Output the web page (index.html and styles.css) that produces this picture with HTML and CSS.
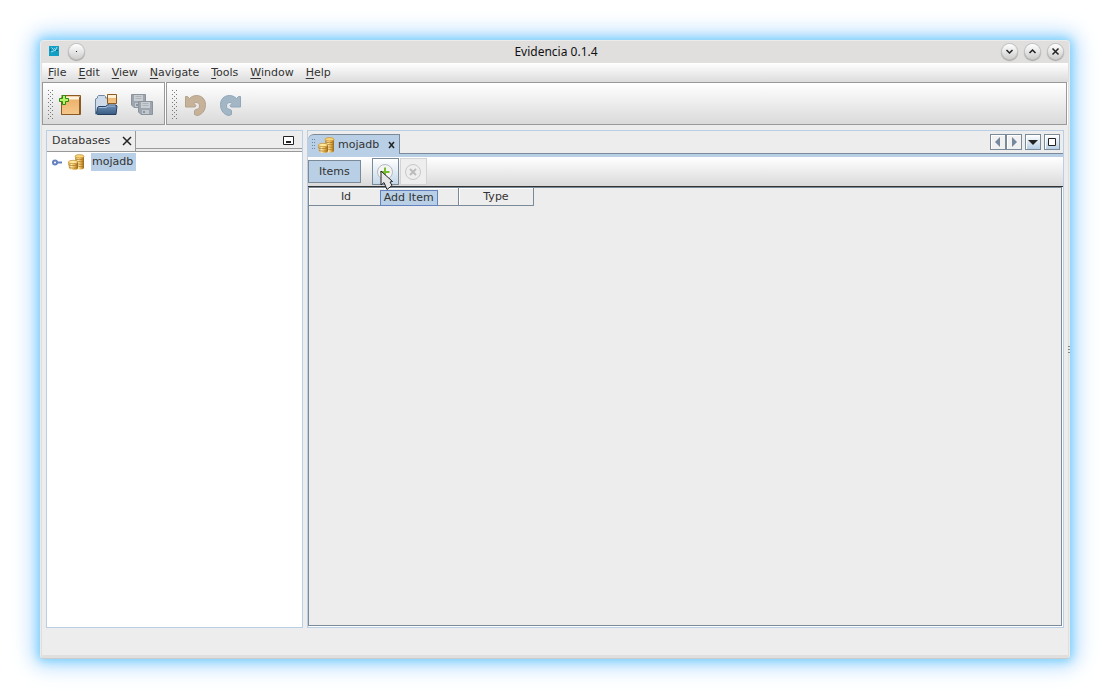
FILE: index.html
```html
<!DOCTYPE html>
<html lang="en">
<head>
<meta charset="utf-8">
<title>Evidencia 0.1.4</title>
<link rel="stylesheet" href="styles.css">
</head>
<body>
<svg class="defs" width="0" height="0" aria-hidden="true">
  <defs>
    <linearGradient id="gold" x1="0" x2="1" y1="0" y2="0">
      <stop offset="0" stop-color="#c98f2e"/><stop offset=".35" stop-color="#ffeeb0"/><stop offset=".7" stop-color="#e6ac45"/><stop offset="1" stop-color="#94651c"/>
    </linearGradient>
    <linearGradient id="box" x1="0" x2="0" y1="0" y2="1">
      <stop offset="0" stop-color="#e8ac62"/><stop offset="1" stop-color="#f6c88c"/>
    </linearGradient>
    <linearGradient id="navy" x1="0" x2="0" y1="0" y2="1">
      <stop offset="0" stop-color="#6d8fb5"/><stop offset="1" stop-color="#3b5c82"/>
    </linearGradient>
    <symbol id="coins" viewBox="0 0 18 16">
      <path d="M7 2l1 12c0 2 7 2 8 0V2z" fill="url(#gold)"/>
      <path d="M0 8l1 6c0 2.500 9 2.500 9 0V8z" fill="url(#gold)"/>
      <path d="M7 4.500c1 1.500 8 1.500 9 0M8 7c2 1 7 1 8 0M9 9.500c2 1 6 1 7 0M10 12c2 1 5 1 6 0M.5 10.500c1 1.500 8 1.500 9 0M1 13c1 1.500 8 1.500 9 0" fill="none" stroke="#a06f20" stroke-width=".7"/>
      <ellipse cx="11.500" cy="2.300" rx="4.500" ry="1.700" fill="#f8d67c" stroke="#c58a2c" stroke-width=".7"/>
      <ellipse cx="5" cy="8" rx="4.500" ry="1.700" fill="#ffe79c" stroke="#c58a2c" stroke-width=".7"/>
    </symbol>
  </defs>
</svg>
<div class="window">
  <header class="titlebar">
    <div class="title-side">
      <svg class="app-icon" width="10" height="10" viewBox="0 0 10 10" aria-hidden="true"><path fill="#129fc4" d="M0 0h10v10H0z"/><path d="M2.500 1.500l2 2 1-1 1 1M8 1L6.500 4M2 6c2-1 3-1 5-2" fill="none" stroke="#c4edf8" stroke-width=".8"/><path fill="#0b6f99" d="M1 3h1v2H1zM7 4h2v1H7z"/></svg>
      <button class="round" aria-label="Window menu"><svg width="15" height="15" viewBox="0 0 15 15"><path fill="#222" d="M7 7h1v1H7z"/></svg></button>
    </div>
    <h1 class="title">Evidencia 0.1.4</h1>
    <div class="title-side title-end">
      <button class="round" aria-label="Minimize"><svg width="15" height="15" viewBox="0 0 15 15"><path d="M4.500 6l3 3 3-3" class="mark"/></svg></button>
      <button class="round" aria-label="Maximize"><svg width="15" height="15" viewBox="0 0 15 15"><path d="M4.500 9l3-3 3 3" class="mark"/></svg></button>
      <button class="round" aria-label="Close"><svg width="15" height="15" viewBox="0 0 15 15"><path d="M4.500 4.500l6 6M10.500 4.500l-6 6" class="mark"/></svg></button>
    </div>
  </header>
  <nav class="menubar">
    <button><u>F</u>ile</button><button><u>E</u>dit</button><button><u>V</u>iew</button><button><u>N</u>avigate</button><button><u>T</u>ools</button><button><u>W</u>indow</button><button><u>H</u>elp</button>
  </nav>
  <div class="toolbars">
    <div class="toolbar">
      <span class="grip"></span>
      <button aria-label="New"><svg width="24" height="24" viewBox="0 0 24 24"><path d="M3.500 5l1-2.500h16l1 2.500v16.500h-18V5z" fill="url(#box)" stroke="#8a5b23"/><path d="M4 3.500h17v3H4z" fill="#fff3df"/><path d="M3.500 2.500h19v19h-19" fill="none" stroke="#8a5b23"/><path d="M4.500 2.500h3v3h3v3h-3v3h-3v-3h-3v-3h3z" fill="#b6f36c" stroke="#2d8a0d" stroke-linejoin="round"/></svg></button>
      <button aria-label="Open"><svg width="24" height="24" viewBox="0 0 24 24"><path d="M1.500 21V6l2-1V3.500l1-1h6l1 1V5h3v16z" fill="#cddaea" stroke="#6f87a3"/><path d="M13.500 1.500h9v9h-9z" fill="url(#box)" stroke="#8a5b23"/><path d="M14 2h8v3h-8z" fill="#fff0d6"/><path d="M3.500 14.500l1-1h7l2-1.500h8.500l1 1-1 8.500H3.500l-1-1z" fill="url(#navy)" stroke="#243f60"/><path d="M5 14.500h7l2-1.500h7" fill="none" stroke="#a5bfdb"/></svg></button>
      <button aria-label="Save all"><svg width="24" height="24" viewBox="0 0 24 24"><g id="disk"><path d="M1.500 1.500h14v13H4L1.500 12z" fill="#9da6af" stroke="#8b949d"/><path d="M4 2h9v6H4z" fill="#c9ced2"/><path d="M5.500 3.500h6M5.500 5.500h6" stroke="#adb3b9"/><path d="M5 10h7v4H5z" fill="#c3c8cc"/><path d="M6 11h2v2H6z" fill="#8b949d"/></g><use href="#disk" x="7" y="7"/></svg></button>
    </div>
    <div class="toolbar toolbar-wide">
      <span class="grip"></span>
      <button aria-label="Undo"><svg width="24" height="24" viewBox="0 0 24 24"><path id="turn" d="M3.500 3.500h2l2 2C9.500 3.500 12 2.500 14.500 2.500c5.500 0 9 4 9 9 0 6-3.500 10.500-8.500 11l-2.500-1v-4l1-1c2.500 0 4-1.500 4-3.500s-1.500-3.500-3.500-3.500c-1 0-1.500.5-2 1l2 2-1 1.500h-9.500z" fill="#c6b199" stroke="#b5a28c"/></svg></button>
      <button aria-label="Redo"><svg width="24" height="24" viewBox="0 0 24 24"><path transform="matrix(-1 0 0 1 26 0)" d="M3.500 3.500h2l2 2C9.500 3.500 12 2.500 14.500 2.500c5.500 0 9 4 9 9 0 6-3.500 10.500-8.500 11l-2.500-1v-4l1-1c2.500 0 4-1.500 4-3.500s-1.500-3.500-3.500-3.500c-1 0-1.500.5-2 1l2 2-1 1.500h-9.500z" fill="#a3b6c6" stroke="#90a7ba"/></svg></button>
    </div>
  </div>
  <main class="workspace">
    <section class="panel explorer">
      <div class="side-tabs">
        <div class="side-tab">Databases<button class="plain" aria-label="Close Databases"><svg width="10" height="10" viewBox="0 0 10 10"><path d="M1 1l8 8M9 1L1 9" stroke="#222" stroke-width="1.500"/></svg></button></div>
        <div class="side-rest"><button class="plain" aria-label="Minimize panel"><svg width="11" height="9" viewBox="0 0 11 9"><path d="M.5.5h10v8H.5z" fill="#fff" stroke="#222"/><path fill="#222" d="M3 5h5v2H3z"/></svg></button></div>
      </div>
      <ul class="tree">
        <li><svg width="11" height="7" viewBox="0 0 11 7" aria-hidden="true"><circle cx="3" cy="3.500" r="2" fill="#fff" stroke="#6680c0" stroke-width="2"/><path d="M5 3.500h5" stroke="#6680c0" stroke-width="2"/></svg><svg width="18" height="16" aria-hidden="true"><use href="#coins"/></svg><span class="node">mojadb</span></li>
      </ul>
    </section>
    <section class="panel editor">
      <div class="doc-tabs">
        <div class="doc-tab"><span class="tab-grip"></span><svg width="18" height="16" aria-hidden="true"><use href="#coins"/></svg><span>mojadb</span><button class="plain" aria-label="Close mojadb"><svg width="8" height="8" viewBox="0 0 8 8"><path d="M1 1l5 6M6 1L1 7" stroke="#222" stroke-width="1.500"/></svg></button></div>
        <div class="doc-controls">
          <div class="pair"><button class="nav" aria-label="Previous tab"><svg width="14" height="14" viewBox="0 0 14 14"><path d="M9 2v10L4 7z" fill="#76889d"/></svg></button><button class="nav" aria-label="Next tab"><svg width="14" height="14" viewBox="0 0 14 14"><path d="M5 2v10l5-5z" fill="#76889d"/></svg></button></div>
          <button class="nav lit" aria-label="Tab list"><svg width="14" height="14" viewBox="0 0 14 14"><path d="M2 5h10L7 10z" fill="#222"/></svg></button>
          <button class="nav lit" aria-label="Maximize editor"><svg width="14" height="14" viewBox="0 0 14 14"><path d="M3.500 3.500h7v7h-7z" fill="#fff" stroke="#222"/></svg></button>
        </div>
      </div>
      <div class="view-bar">
        <button class="items">Items</button>
        <div class="actions">
          <button class="action add" aria-label="Add Item"><svg width="18" height="18" viewBox="0 0 18 18"><circle cx="9" cy="9" r="7.500" fill="#f4f4f4" stroke="#b4babf"/><path d="M9 4.500v9M4.500 9h9" stroke="#76bd2c" stroke-width="2"/></svg><svg class="pointer" width="14" height="21" viewBox="0 0 14 21" aria-hidden="true"><path d="M1 1v14l3-2.500L7 19.500l5-4-2-3.500 2.500-.5z" fill="#e6e6e6" stroke="#222" stroke-linejoin="round"/></svg></button>
          <button class="action off" aria-label="Remove" disabled><svg width="18" height="18" viewBox="0 0 18 18"><circle cx="9" cy="9" r="7.500" fill="#eee" stroke="#c8c8c8"/><path d="M6 6l6 6M12 6l-6 6" stroke="#bcbcbc" stroke-width="2"/></svg></button>
          <span class="tooltip" role="tooltip">Add Item</span>
        </div>
      </div>
      <div class="table-area">
        <table class="grid"><thead><tr><th>Id</th><th></th><th>Type</th></tr></thead></table>
      </div>
    </section>
  </main>
  <footer class="status"></footer>
  <span class="edge-grip"></span>
</div>
</body>
</html>
```
FILE: styles.css
```css
* { box-sizing: border-box; }
body {
  margin: 0;
  min-height: 100vh;
  padding: 40px;
  display: flex;
  background: #fff;
  color: #333;
  font: 11px/14px "DejaVu Sans", sans-serif;
}
button {
  margin: 0;
  padding: 0;
  border: 0;
  background: none;
  color: inherit;
  font: inherit;
}
svg { display: block; }
.defs { position: absolute; }
.window {
  position: relative;
  flex: 1;
  min-width: 0;
  display: flex;
  flex-direction: column;
  padding: 0 1px;
  border: 1px solid #ebebeb;
  border-bottom-color: #c9cccf;
  border-radius: 4px;
  background: #e0dfde;
  box-shadow: 0 0 10px 1px #74cefa, 0 0 18px 4px #b0dfff, 0 0 26px 8px #dcebff;
}
.titlebar {
  height: 22px;
  display: flex;
  align-items: center;
  padding: 0 5px 0 7px;
}
.title-side { flex: 1; display: flex; align-items: center; gap: 10px; padding-bottom: 2px; }
.title-end { justify-content: flex-end; gap: 8px; }
.title {
  margin: 0;
  font: 12px/16px "Noto Sans", sans-serif;
  color: #111;
}
.round {
  border-radius: 50%;
  background: linear-gradient(#fff, #cfcecd);
  box-shadow: 0 0 0 1px #c4c4c4, 0 1px 1px 1px #a4a4a4;
}
.mark { fill: none; stroke: #222; stroke-width: 1.5; }
.menubar {
  height: 19px;
  display: flex;
  align-items: center;
  background: linear-gradient(#fff, #dcdcdc);
}
.menubar button { padding: 0 6px; }
u { text-underline-offset: 2px; }
.toolbars {
  display: flex;
  gap: 1px;
  padding-right: 1px;
  background: #fff;
}
.toolbar {
  height: 43px;
  display: flex;
  align-items: center;
  gap: 12px;
  padding: 2px 10px 0 5px;
  border: 1px solid #999;
  background: linear-gradient(#fff, #dadada);
}
.toolbar-wide { flex: 1; }
.grip {
  width: 6px;
  height: 30px;
  margin-right: -8px;
  background:
    linear-gradient(#777, #777) 0 0 / 0 0,
    conic-gradient(#777 25%, transparent 0) -1px 1px / 2px 2px;
  background:
    conic-gradient(from 270deg at 1px 1px, #777 90deg, transparent 0) 0 0 / 4px 4px,
    conic-gradient(from 270deg at 1px 1px, #777 90deg, transparent 0) 2px 2px / 4px 4px;
}
.workspace {
  flex: 1;
  display: flex;
  gap: 4px;
  padding: 5px 4px 0;
  background: #ededed;
}
.panel {
  display: flex;
  flex-direction: column;
  border: 1px solid #b8cfe5;
}
.explorer { flex: 0 0 257px; background: #fff; }
.side-tabs { height: 21px; display: flex; background: #ededed; border-bottom: 1px solid #999; }
.side-tab { width: 89px; display: flex; align-items: center; padding-left: 5px; border-right: 1px solid #999; white-space: nowrap; }
.side-rest { flex: 1; height: 18px; display: flex; align-items: center; justify-content: flex-end; padding: 2px 8px 0 0; border-bottom: 1px solid #999; }
.side-tab .plain { margin-left: auto; margin-right: 3px; }
.tree { margin: 0; padding: 1px 0 0 5px; list-style: none; }
.tree li { display: flex; align-items: center; gap: 5px; height: 18px; }
.node { padding: 2px 3px 2px 1px; background: #b8cfe5; }
.editor { flex: 1; min-width: 0; background: #ededed; }
.doc-tabs {
  height: 26px;
  display: flex;
  align-items: flex-end;
  justify-content: space-between;
  border-bottom: 3px solid #b8cfe5;
  box-shadow: inset 0 -1px #7a8a99;
}
.doc-tab {
  height: 20px;
  display: flex;
  align-items: center;
  padding: 0 3px 0 4px;
  border: 1px solid #7a8a99;
  border-width: 1px 1px 0 0;
  border-top-left-radius: 6px;
  background: #b8cfe5;
}
.doc-tab > span + svg { margin-left: 3px; }
.doc-tab > svg + span { margin: 0 9px 0 2px; }
.tab-grip {
  width: 3px;
  height: 12px;
  background: conic-gradient(from 270deg at 1px 1px, #6e87a5 90deg, transparent 0) 0 0 / 2px 3px;
}
.doc-controls { display: flex; gap: 3px; padding: 0 3px 4px 0; }
.pair { display: flex; }
.nav { border: 1px solid #7a8a99; background: #f1f1f1; box-shadow: inset 1px 1px #fff; }
.lit { background: linear-gradient(#fff, #b8cfe5); }
.view-bar {
  height: 30px;
  display: flex;
  gap: 11px;
  border-bottom: 1px solid #333;
  background: linear-gradient(#fff, #dadada);
}
.items { height: 23px; margin-top: 3px; padding: 0 10px; border: 1px solid #7a8a99; background: #b8cfe5; }
.actions { position: relative; display: flex; gap: 1px; padding-top: 1px; }
.action {
  position: relative;
  width: 27px;
  height: 27px;
  display: grid;
  place-items: center;
  border: 1px solid #d3d3d3;
}
.add { border-color: #7a8a99; background: linear-gradient(#fff, #c5d7e8); }
.off { background: #eee; }
.pointer { position: absolute; left: 7px; top: 11px; z-index: 3; }
.tooltip {
  position: absolute;
  left: 8px;
  top: 33px;
  z-index: 2;
  padding: 0 3px;
  border: 1px solid #6382bf;
  background: #b8cfe5;
  white-space: nowrap;
}
.table-area { flex: 1; margin: 0 1px 1px 0; border: 1px solid #7a8a99; box-shadow: 1px 1px #fff; }
.grid { border-collapse: separate; border-spacing: 0; table-layout: fixed; width: 225px; }
.grid th {
  height: 18px;
  padding: 0;
  border: 1px solid #7a8a99;
  border-width: 0 1px 1px 0;
  box-shadow: inset 1px 1px #fff;
  font-weight: normal;
}
.grid th:first-child { border-right-color: #ededed; }
.status { height: 30px; background: #ededed; border-bottom: 3px solid #e0dfde; }
.edge-grip {
  position: absolute;
  right: -1px;
  top: 50%;
  width: 2px;
  height: 9px;
  margin-top: -4px;
  background: repeating-linear-gradient(#888 0 1px, transparent 1px 3px);
}
```
